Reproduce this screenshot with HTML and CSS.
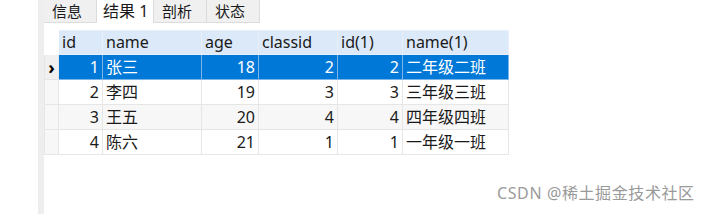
FILE: index.html
```html
<html>
<head>
<title>结果 1</title>
<link rel="stylesheet" href="styles.css">
</head>
<body>
<div class="frame">
	<div class="gutter"></div>
	<div class="strip"></div>
	<div class="main">
		<div class="tabs">
			<div class="tab">信息</div>
			<div class="tab active">结果 1</div>
			<div class="tab">剖析</div>
			<div class="tab">状态</div>
		</div>
		<table class="grid">
			<colgroup>
				<col class="c-ind">
				<col class="c-id">
				<col class="c-name">
				<col class="c-age">
				<col class="c-cls">
				<col class="c-id1">
				<col class="c-name1">
			</colgroup>
			<tr class="head">
				<td class="ind"></td>
				<td>id</td>
				<td>name</td>
				<td>age</td>
				<td>classid</td>
				<td>id(1)</td>
				<td>name(1)</td>
			</tr>
			<tr class="sel">
				<td class="ind"><span class="arrow">&#8250;</span></td>
				<td class="num">1</td>
				<td>张三</td>
				<td class="num">18</td>
				<td class="num">2</td>
				<td class="num">2</td>
				<td>二年级二班</td>
			</tr>
			<tr>
				<td class="ind"></td>
				<td class="num">2</td>
				<td>李四</td>
				<td class="num">19</td>
				<td class="num">3</td>
				<td class="num">3</td>
				<td>三年级三班</td>
			</tr>
			<tr class="alt">
				<td class="ind"></td>
				<td class="num">3</td>
				<td>王五</td>
				<td class="num">20</td>
				<td class="num">4</td>
				<td class="num">4</td>
				<td>四年级四班</td>
			</tr>
			<tr>
				<td class="ind"></td>
				<td class="num">4</td>
				<td>陈六</td>
				<td class="num">21</td>
				<td class="num">1</td>
				<td class="num">1</td>
				<td>一年级一班</td>
			</tr>
		</table>
		<div class="mark">CSDN @稀土掘金技术社区</div>
	</div>
</div>
</body>
</html>
```

FILE: styles.css
```css
body { margin:0; background:#ffffff; font-family:"Noto Sans", "Noto Sans CJK SC", sans-serif; font-size:15px; color:#1a1a1a; }
.frame { display:flex; width:711px; height:214px; overflow:hidden; }
.gutter { width:38px; }
.strip { width:6px; background:#eeeeee; }
.main { flex:1; display:flex; flex-direction:column; }

.tabs { display:flex; height:23px; }
.tab { width:53px; background:#f0f0f0; border-right:1px solid #dcdcdc; border-bottom:1px solid #dcdcdc; box-sizing:border-box; line-height:23px; padding-left:8px; font-size:15px; }
.tab.active { background:#ffffff; border-bottom:none; width:57px; padding-left:6px; font-size:16px; line-height:22px; }

.grid { border-collapse:collapse; margin-top:7px; table-layout:fixed; width:464px; }
.c-ind { width:14px; }
.c-id { width:44px; }
.c-name { width:99px; }
.c-age { width:57px; }
.c-cls { width:79px; }
.c-id1 { width:65px; }
.c-name1 { width:106px; }

.grid td { border:1px solid #e6e6e6; height:25px; padding:0 3px; white-space:nowrap; line-height:23px; overflow:hidden; }
.grid .head td { background:#dce9f8; height:24px; border-color:#e8eff8; }
.grid .head td.ind { background:#ffffff; border-color:#ffffff; }
.grid td.ind { padding:0; background:#f7f7f7; text-align:center; }
.grid .num { text-align:right; }

.grid .sel td { background:#0078d7; color:#ffffff; border-color:#7ab4e8; }
.grid .sel td.ind { background:#f0f0f0; color:#000000; border-color:#e6e6e6; }
.arrow { font-weight:bold; font-size:18px; line-height:20px; }
.grid .alt td { background:#f7f7f7; }

.mark { margin-top:25px; margin-left:453px; color:#9a9a9a; font-size:16px; letter-spacing:0.6px; white-space:nowrap; }
```
